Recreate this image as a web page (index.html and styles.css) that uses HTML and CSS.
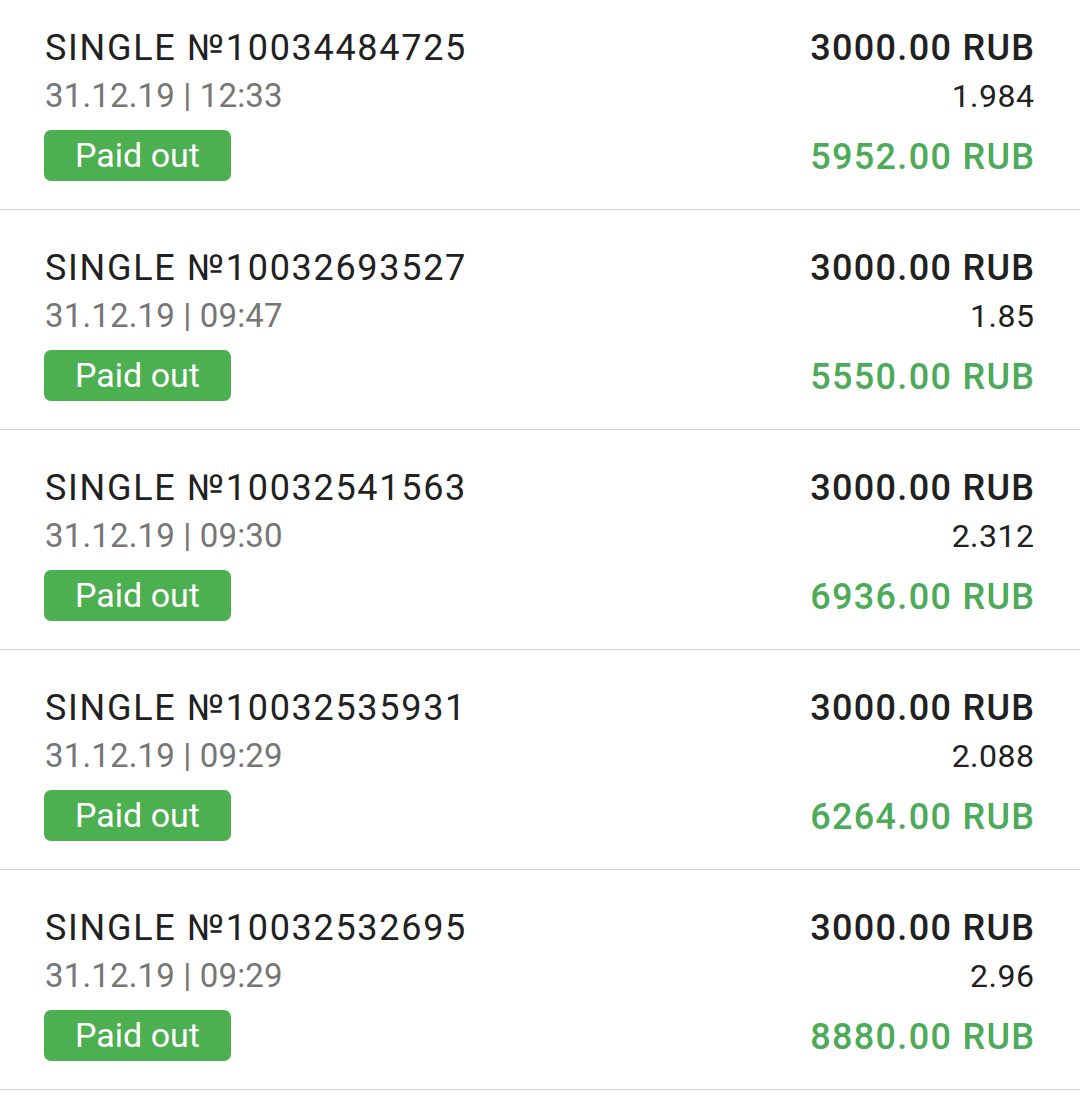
FILE: index.html
```html
<!DOCTYPE html>
<html>
<head>
<meta charset="utf-8">
<link rel="stylesheet" href="styles.css">
</head>
<body>
<div class="list">
  <div class="row">
    <div class="left">
      <div class="title">SINGLE №10034484725</div>
      <div class="date">31.12.19 | 12:33</div>
      <div class="badge">Paid out</div>
    </div>
    <div class="right">
      <div class="amount">3000.00 RUB</div>
      <div class="odds">1.984</div>
      <div class="win">5952.00 RUB</div>
    </div>
  </div>
  <div class="row">
    <div class="left">
      <div class="title">SINGLE №10032693527</div>
      <div class="date">31.12.19 | 09:47</div>
      <div class="badge">Paid out</div>
    </div>
    <div class="right">
      <div class="amount">3000.00 RUB</div>
      <div class="odds">1.85</div>
      <div class="win">5550.00 RUB</div>
    </div>
  </div>
  <div class="row">
    <div class="left">
      <div class="title">SINGLE №10032541563</div>
      <div class="date">31.12.19 | 09:30</div>
      <div class="badge">Paid out</div>
    </div>
    <div class="right">
      <div class="amount">3000.00 RUB</div>
      <div class="odds">2.312</div>
      <div class="win">6936.00 RUB</div>
    </div>
  </div>
  <div class="row">
    <div class="left">
      <div class="title">SINGLE №10032535931</div>
      <div class="date">31.12.19 | 09:29</div>
      <div class="badge">Paid out</div>
    </div>
    <div class="right">
      <div class="amount">3000.00 RUB</div>
      <div class="odds">2.088</div>
      <div class="win">6264.00 RUB</div>
    </div>
  </div>
  <div class="row">
    <div class="left">
      <div class="title">SINGLE №10032532695</div>
      <div class="date">31.12.19 | 09:29</div>
      <div class="badge">Paid out</div>
    </div>
    <div class="right">
      <div class="amount">3000.00 RUB</div>
      <div class="odds">2.96</div>
      <div class="win">8880.00 RUB</div>
    </div>
  </div>
</div>
</body>
</html>
```

FILE: styles.css
```css
html, body {
  margin: 0;
  padding: 0;
  background: #ffffff;
}
body {
  font-family: Roboto, "Noto Sans", sans-serif;
  overflow: hidden;
}
.list {
  margin-top: -10px;
}
.row {
  box-sizing: border-box;
  height: 220px;
  padding: 36px 46px 0 44px;
  border-bottom: 1px solid #cfcfcf;
  display: flex;
  justify-content: space-between;
}
.left {
  display: flex;
  flex-direction: column;
  align-items: flex-start;
}
.title {
  font-size: 36px;
  line-height: 44px;
  color: #212121;
  padding-left: 1px;
  letter-spacing: 1.7px;
}
.date {
  margin-top: 4px;
  font-size: 33px;
  line-height: 44px;
  color: #767676;
  padding-left: 1px;
  letter-spacing: 0.15px;
}
.badge {
  margin-top: 12px;
  height: 51px;
  line-height: 51px;
  padding: 0 31px;
  background: #4caf50;
  color: #ffffff;
  font-size: 34px;
  border-radius: 7px;
}
.right {
  display: flex;
  flex-direction: column;
  align-items: flex-end;
}
.amount {
  font-size: 36px;
  line-height: 44px;
  font-weight: 500;
  color: #212121;
  letter-spacing: 1.3px;
  margin-right: -1.3px;
}
.odds {
  margin-top: 4px;
  font-size: 32px;
  line-height: 44px;
  color: #212121;
  letter-spacing: 0.5px;
  margin-right: -0.5px;
}
.win {
  margin-top: 17px;
  font-size: 36px;
  line-height: 44px;
  font-weight: 500;
  color: #4caa58;
  letter-spacing: 1.3px;
  margin-right: -1.3px;
}
```
